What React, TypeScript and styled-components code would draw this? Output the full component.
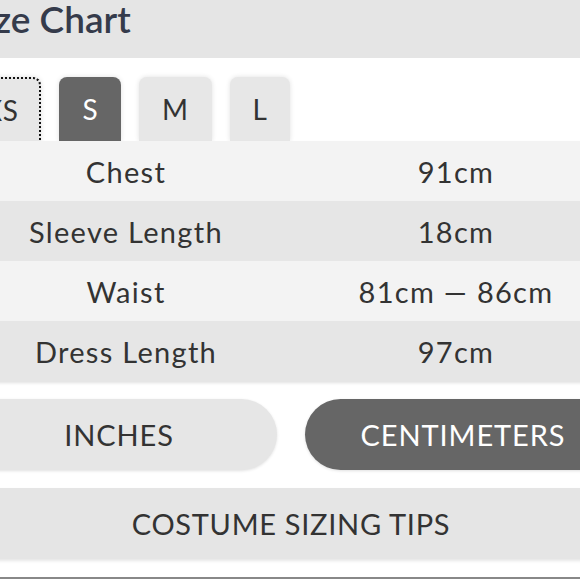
import styled, { createGlobalStyle } from "styled-components";
import { useState } from "react";

const GlobalStyle = createGlobalStyle`
  html, body {
    margin: 0;
    padding: 0;
    background: #fff;
    overflow: hidden;
  }
  body {
    font-family: Lato, "Open Sans", sans-serif;
    color: #333;
  }
`;

const SIZES = ["XS", "S", "M", "L"];

const ROWS = [
  { label: "Chest", value: "91cm" },
  { label: "Sleeve Length", value: "18cm" },
  { label: "Waist", value: "81cm — 86cm" },
  { label: "Dress Length", value: "97cm" },
];

const App = () => {
  const [size, setSize] = useState("S");
  const [unit, setUnit] = useState("cm");

  return (
    <>
      <GlobalStyle />
      <Page>
        <Header>
          <Title>Size Chart</Title>
        </Header>
        <Content>
          <Tabs>
            {SIZES.map((s, idx) => (
              <Tab
                key={s}
                $active={s === size}
                $focused={idx === 0}
                onClick={() => setSize(s)}
              >
                {s}
              </Tab>
            ))}
          </Tabs>
          <Table>
            {ROWS.map((row, idx) => (
              <Row key={row.label} $odd={idx % 2 === 1}>
                <Cell>{row.label}</Cell>
                <Cell>{row.value}</Cell>
              </Row>
            ))}
          </Table>
          <Units>
            <UnitButton $active={unit === "in"} onClick={() => setUnit("in")}>
              INCHES
            </UnitButton>
            <UnitButton $active={unit === "cm"} onClick={() => setUnit("cm")}>
              CENTIMETERS
            </UnitButton>
          </Units>
          <TipsButton>COSTUME SIZING TIPS</TipsButton>
        </Content>
        <Footer />
      </Page>
    </>
  );
};

export default App;

const Page = styled.div`
  width: 580px;
  height: 580px;
  overflow: hidden;
`;

const Header = styled.div`
  height: 58px;
  background: #e5e5e5;
  overflow: hidden;
`;

const Title = styled.h1`
  margin: 0 0 0 -35px;
  font-size: 37px;
  line-height: 38px;
  font-weight: 600;
  color: #353b4b;
  white-space: nowrap;
`;

const Content = styled.div`
  margin-left: -39px;
  width: 660px;
`;

const Tabs = styled.div`
  display: flex;
  gap: 18px;
  padding-top: 19px;
`;

const Tab = styled.button<{ $active: boolean; $focused: boolean }>`
  height: 64px;
  padding: ${(p) => (p.$focused ? "0 21px" : "0 23px")};
  border: ${(p) => (p.$focused ? "2px dotted #111" : "none")};
  border-bottom: none;
  border-radius: 8px 8px 0 0;
  background: ${(p) => (p.$active ? "#666" : "#e7e7e7")};
  color: ${(p) => (p.$active ? "#fff" : "#333")};
  font-family: Lato, "Open Sans", sans-serif;
  font-size: 28px;
  letter-spacing: 0.5px;
  box-shadow: 0 0 5px rgba(0, 0, 0, 0.12);
  cursor: pointer;
`;

const Table = styled.div`
  position: relative;
  box-shadow: 0 2px 3px rgba(0, 0, 0, 0.12);
`;

const Row = styled.div<{ $odd: boolean }>`
  display: grid;
  grid-template-columns: 1fr 1fr;
  height: 60px;
  align-items: center;
  background: ${(p) => (p.$odd ? "#e6e6e6" : "#f3f3f3")};
`;

const Cell = styled.div`
  text-align: center;
  font-size: 29px;
  letter-spacing: 1.3px;
  color: #333;
`;

const Units = styled.div`
  display: grid;
  grid-template-columns: 1fr 1fr;
  gap: 28px;
  margin-top: 18px;
`;

const UnitButton = styled.button<{ $active: boolean }>`
  height: 71px;
  border: none;
  border-radius: 36px;
  background: ${(p) => (p.$active ? "#666" : "#e6e6e6")};
  color: ${(p) => (p.$active ? "#fff" : "#333")};
  font-family: Lato, "Open Sans", sans-serif;
  font-size: 29px;
  letter-spacing: 0.9px;
  box-shadow: 0 1px 3px rgba(0, 0, 0, 0.12);
  cursor: pointer;
`;

const TipsButton = styled.button`
  display: block;
  width: 100%;
  height: 71px;
  margin-top: 18px;
  border: none;
  background: #e5e5e5;
  color: #333;
  font-family: Lato, "Open Sans", sans-serif;
  font-size: 29px;
  letter-spacing: 0.7px;
  box-shadow: 0 2px 3px rgba(0, 0, 0, 0.1);
  cursor: pointer;
`;

const Footer = styled.div`
  margin-top: 18px;
  border-top: 2px solid #888;
`;
